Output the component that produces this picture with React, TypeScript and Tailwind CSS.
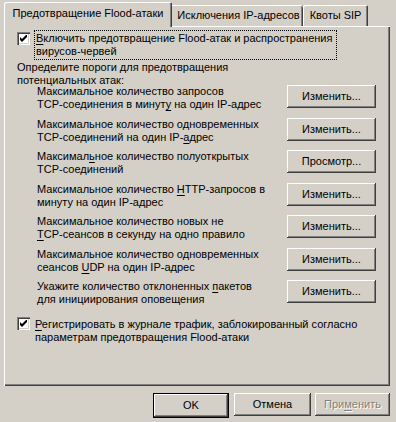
import React from 'react';

const raised =
  'shadow-[inset_-1px_-1px_0_#404040,inset_1px_1px_0_#ffffff,inset_-2px_-2px_0_#808080]';

function Check({ checked }: { checked?: boolean }) {
  return (
    <div className="w-[13px] h-[13px] shrink-0 bg-white shadow-[inset_1px_1px_0_#808080,inset_2px_2px_0_#404040,inset_-1px_-1px_0_#ffffff,inset_-2px_-2px_0_#d4d0c8] flex items-center justify-center">
      {checked && (
        <svg width="7" height="7" viewBox="0 0 7 7" className="block">
          <polygon points="0,2 2,4 7,-1 7,2 2,7 0,5" fill="#000" />
        </svg>
      )}
    </div>
  );
}

function Btn({ children, className = '' }: { children: React.ReactNode; className?: string }) {
  return (
    <div
      className={`h-[23px] shrink-0 bg-[#d4d0c8] flex items-center justify-center ${raised} ${className}`}
    >
      {children}
    </div>
  );
}

const rows: { lines: React.ReactNode[]; action: string }[] = [
  {
    lines: ['Максимальное количество запросов', <>TCP-соединения в минут<u>у</u> на один IP-адрес</>],
    action: 'Изменить...',
  },
  {
    lines: ['Максимальное количество одновременных', <>TCP-соединений на один IP-<u>а</u>дрес</>],
    action: 'Изменить...',
  },
  {
    lines: [<>Максимал<u>ь</u>ное количество полуоткрытых</>, 'TCP-соединений'],
    action: 'Просмотр...',
  },
  {
    lines: [<>Максимальное количество <u>H</u>TTP-запросов в</>, 'минуту на один IP-адрес'],
    action: 'Изменить...',
  },
  {
    lines: ['Максимальное количество новых не', <><u>T</u>CP-сеансов в секунду на одно правило</>],
    action: 'Изменить...',
  },
  {
    lines: ['Максимальное количество одновременных', <>сеансов <u>U</u>DP на один IP-адрес</>],
    action: 'Изменить...',
  },
  {
    lines: [<>Укажите количество отклоненных <u>п</u>акетов</>, 'для инициирования оповещения'],
    action: 'Изменить...',
  },
];

export default function App() {
  return (
    <div
      className="w-[396px] h-[422px] bg-[#d4d0c8] text-black text-[11px] leading-[13px] overflow-hidden [&_u]:underline-offset-[2px]"
      style={{ fontFamily: '"Liberation Sans", Arial, sans-serif' }}
    >
      <div className="pl-[4px] pt-[2px]">
        {/* Tabs */}
        <div className="flex items-end h-[24px]">
          <div className="relative z-10 -mb-px h-[25px] w-[168px] bg-[#d4d0c8] rounded-tl-[2px] rounded-tr-[2px] shadow-[inset_1px_1px_0_#ffffff,inset_-1px_0_0_#404040,inset_-2px_0_0_#808080] flex items-center justify-center pb-[2px]">
            Предотвращение Flood-атаки
          </div>
          <div className="h-[21px] w-[131px] rounded-tr-[2px] shadow-[inset_0_1px_0_#ffffff,inset_-1px_0_0_#404040,inset_-2px_0_0_#808080] flex items-center justify-center pl-[2px]">
            Исключения IP-адресов
          </div>
          <div className="h-[21px] w-[65px] rounded-tr-[2px] rounded-tl-[2px] shadow-[inset_1px_1px_0_#ffffff,inset_-1px_0_0_#404040,inset_-2px_0_0_#808080] flex items-center justify-center">
            Квоты SIP
          </div>
        </div>

        {/* Panel */}
        <div className="w-[386px] h-[360px] shadow-[inset_1px_1px_0_#ffffff,inset_-1px_-1px_0_#404040,inset_-2px_-2px_0_#808080] pl-[13px] pr-[14px] pt-[4px] flex flex-col">
          <div className="flex items-start gap-[4px]">
            <div className="mt-[2px]">
              <Check checked />
            </div>
            <div className="border border-dotted border-black py-[1px] pl-[1px] pr-[4px]">
              <div>
                <u>В</u>ключить предотвращение Flood-атак и распространения
              </div>
              <div>вирусов-червей</div>
            </div>
          </div>

          <div className="mt-[1px]">
            <div>Определите пороги для предотвращения</div>
            <div>потенциальных атак:</div>
          </div>

          <div className="mt-[-2px] flex flex-col gap-[6.5px]">
            {rows.map((r, i) => (
              <div key={i} className="flex items-start h-[26px] pl-[20px]">
                <div className="flex-1">
                  {r.lines.map((l, j) => (
                    <div key={j}>{l}</div>
                  ))}
                </div>
                <Btn className="w-[89px]">{r.action}</Btn>
              </div>
            ))}
          </div>

          <div className="mt-[11px] flex items-start gap-[5px]">
            <Check checked />
            <div className="mt-[1px]">
              <div>
                <u>Р</u>егистрировать в журнале трафик, заблокированный согласно
              </div>
              <div>параметрам предотвращения Flood-атаки</div>
            </div>
          </div>
        </div>

        {/* Dialog buttons */}
        <div className="mt-[7px] flex pl-[149px]">
          <div className="border border-black">
            <Btn className="w-[74px] h-[21px]">OK</Btn>
          </div>
          <Btn className="w-[77px] ml-[5px]">Отмена</Btn>
          <Btn className="w-[75px] ml-[4px] text-[#808080] [text-shadow:1px_1px_0_#ffffff]">
            <span>
              При<u>м</u>енить
            </span>
          </Btn>
        </div>
      </div>
    </div>
  );
}
